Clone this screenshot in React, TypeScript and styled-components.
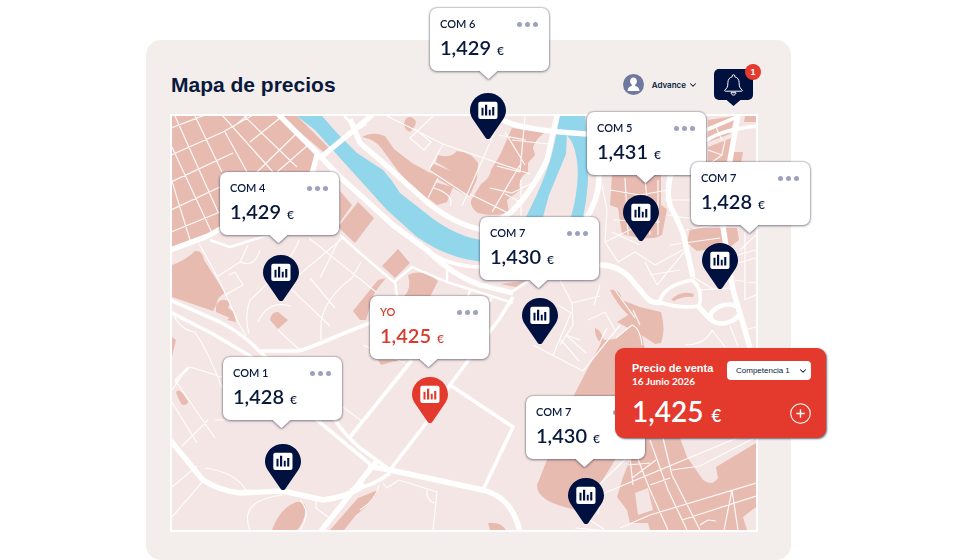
import styled, { createGlobalStyle, css } from 'styled-components';
import { ChevronDown } from 'lucide-react';

const colors = {
  navy: '#00113f',
  ink: '#08193c',
  red: '#e4392d',
  panel: '#f3eeeb',
  land: '#f4e6e4',
  block: '#e8bbb1',
  water: '#92d6ec',
  dot: '#9da1be',
};

const sans = "'Liberation Sans', Arial, sans-serif";
const rounded = "Lato, 'Liberation Sans', sans-serif";

// visible area of the city plan, in plan units
const plan = { x: 172, y: 116, width: 584, height: 414 };

const GlobalStyle = createGlobalStyle`
  * {
    box-sizing: border-box;
  }

  body {
    margin: 0;
    background: #fff;
    color: ${colors.ink};
    font-family: ${sans};
  }

  button {
    border: none;
    padding: 0;
    background: none;
    color: inherit;
    font: inherit;
    cursor: pointer;
  }
`;

const Page = styled.main`
  display: grid;
  grid-template-columns: 146fr 645fr 189fr;
  padding-top: 40px;
  overflow: hidden;
`;

const Panel = styled.section`
  grid-column: 2;
  min-width: 0;
  padding: 29px 33px 28px 24px;
  border-radius: 15px;
  background: ${colors.panel};
`;

const Header = styled.header`
  display: flex;
  align-items: center;
  justify-content: space-between;
  height: 31px;
  margin-bottom: 14px;
  padding: 0 5px 0 1px;
`;

const Title = styled.h1`
  margin: 0;
  font-size: 21px;
  line-height: 24px;
  font-weight: 700;
`;

const HeaderActions = styled.div`
  display: flex;
  align-items: center;
  gap: 16px;
`;

const UserButton = styled.button`
  display: flex;
  align-items: center;
  gap: 2px;
  font-family: Inter, ${sans};
  font-size: 8px;
  line-height: 12px;
  font-weight: 600;
`;

const Avatar = styled.svg`
  width: 21px;
  height: 21px;
  margin-right: 6px;
`;

const BellButton = styled.button`
  position: relative;
  display: grid;
  place-items: center;
  width: 39px;
  height: 31px;
  border-radius: 5px;
  background: ${colors.navy};

  &::after {
    content: '';
    position: absolute;
    top: 100%;
    left: 50%;
    width: 14px;
    height: 6px;
    margin-left: -7px;
    background: ${colors.navy};
    clip-path: polygon(0 0, 100% 0, 50% 100%);
  }
`;

const Badge = styled.span`
  position: absolute;
  top: -5px;
  right: -8px;
  width: 16px;
  height: 16px;
  border-radius: 50%;
  background: ${colors.red};
  color: #fff;
  font-size: 9px;
  line-height: 16px;
  font-weight: 700;
  text-align: center;
`;

const Map = styled.div`
  position: relative;
  border: 2px solid #fff;
`;

const CitySvg = styled.svg`
  display: block;
  width: 100%;
  height: auto;
  background: ${colors.land};
`;

const placed = css<{ $x: number; $y: number }>`
  position: absolute;
  left: ${({ $x }) => (($x - plan.x) / plan.width) * 100}%;
  top: ${({ $y }) => (($y - plan.y) / plan.height) * 100}%;
`;

const PinSvg = styled.svg<{ $x: number; $y: number }>`
  ${placed}
  width: 36px;
  height: 46px;
`;

const Callout = styled.article<{ $x: number; $y: number; $own?: boolean }>`
  ${placed}
  width: 119px;
  height: 63px;
  padding: 8px 10px;
  border-radius: 7px;
  background: #fff;
  color: ${({ $own }) => ($own ? '#d63c2c' : colors.ink)};
  font-family: ${rounded};
  filter: drop-shadow(0 0 1px rgba(40, 40, 65, 0.6)) drop-shadow(0 1px 1px rgba(40, 40, 65, 0.35));

  &::after {
    content: '';
    position: absolute;
    top: 100%;
    left: 50%;
    width: 18px;
    height: 8px;
    margin-left: -10px;
    background: #fff;
    clip-path: polygon(0 0, 100% 0, 56% 92%, 50% 100%, 44% 92%);
  }
`;

const CalloutTop = styled.div`
  display: flex;
  align-items: center;
  justify-content: space-between;
  height: 16px;
`;

const CalloutName = styled.h2`
  margin: 0;
  font-size: 11px;
  line-height: 16px;
  font-weight: 600;
`;

const DotsButton = styled.button`
  display: flex;
  gap: 3px;
  margin-right: 1px;

  i {
    width: 5px;
    height: 5px;
    border-radius: 50%;
    background: ${colors.dot};
  }
`;

const Price = styled.p<{ $large?: boolean }>`
  display: flex;
  align-items: baseline;
  gap: ${({ $large }) => ($large ? 8 : 6)}px;
  margin: 0;
  font-family: ${rounded};
  font-size: ${({ $large }) => ($large ? 28 : 20)}px;
  line-height: ${({ $large }) => ($large ? 32 : 30)}px;
  font-weight: 600;

  small {
    font-size: ${({ $large }) => ($large ? 17 : 12)}px;
  }
`;

const SaleCard = styled.section<{ $x: number; $y: number }>`
  ${placed}
  display: flex;
  flex-direction: column;
  justify-content: space-between;
  width: 211px;
  height: 90px;
  padding: 13px 15px 6px 17px;
  border-radius: 9px;
  background: ${colors.red};
  color: #fff;
  box-shadow: 1px 1px 2px rgba(40, 40, 65, 0.7);
`;

const SaleRow = styled.div`
  display: flex;
  align-items: center;
  justify-content: space-between;
`;

const SaleTitle = styled.h2`
  margin: 0;
  font-size: 11px;
  line-height: 14px;
  font-weight: 700;
  white-space: nowrap;
`;

const SaleDate = styled.time`
  display: block;
  font-family: ${rounded};
  font-size: 10px;
  line-height: 13px;
  font-weight: 700;
`;

const SelectBox = styled.label`
  position: relative;
  align-self: flex-start;

  svg {
    position: absolute;
    top: 5px;
    right: 3px;
    color: ${colors.ink};
    pointer-events: none;
  }
`;

const Select = styled.select`
  display: block;
  width: 84px;
  height: 19px;
  padding: 0 14px 0 9px;
  border: none;
  border-radius: 4px;
  appearance: none;
  background: #fff;
  color: ${colors.ink};
  font-family: ${sans};
  font-size: 8px;
`;

const AddButton = styled.button`
  display: grid;
  place-items: center;
  width: 21px;
  height: 21px;
`;

type Competitor = {
  name: string;
  price: string;
  card: [number, number];
  pin: [number, number];
  own?: boolean;
};

const competitors: Competitor[] = [
  { name: 'COM 6', price: '1,429', card: [430, 8], pin: [470, 93] },
  { name: 'COM 4', price: '1,429', card: [220, 172], pin: [263, 255] },
  { name: 'COM 5', price: '1,431', card: [587, 112], pin: [623, 195] },
  { name: 'COM 7', price: '1,428', card: [691, 162], pin: [702, 243] },
  { name: 'COM 7', price: '1,430', card: [480, 217], pin: [522, 298] },
  { name: 'YO', price: '1,425', card: [370, 296], pin: [412, 377], own: true },
  { name: 'COM 1', price: '1,428', card: [223, 357], pin: [265, 444] },
  { name: 'COM 7', price: '1,430', card: [526, 396], pin: [568, 478] },
];

const blocks = [
  'M172 116H277L317 155 312 174H220V228L206 235 172 247Z',
  'M280 116H297L332 151 326 154Z',
  'M340 191L352 205 340 222Z',
  'M358 202L374 218 355 243 338 227Z',
  'M172 265Q186 260 195 251 202 250 204 260L225 293Q218 296 216 305L213 311 172 297Z',
  'M216 305q4-6 9-5q6 1 4 6q-3 2 4 5q4 6-3 7l-14-6Z',
  'M270 320Q271 312 278 312L288 320 278 329Z',
  'M172 337L176 340 172 356Z',
  'M176 392q3-4 7 2l5 7q0 4-5 4q-3-1-7-13Z',
  'M227 320l7-6 2 8Z',
  'M272 530Q280 508 296 502 307 500 306 511 303 524 297 530Z',
  'M330 530Q344 514 358 498L378 490Q376 500 356 515L344 530Z',
  'M488 523Q500 521 506 530H490Z',
  'M362 137Q372 131 385 136L394 149 412 163Q424 169 438 178L428 199Q412 188 398 171L382 149Q375 139 362 137Z',
  'M404 124Q405 116 411 117 418 120 415 126L410 132Q404 129 404 124Z',
  'M428 170L434 164 451 171 436 162 438 155Q450 159 457 151 471 152 478 163L477 179 469 197 436 178 428 170Z',
  'M434 182L453 187 447 202 437 205 428 198Z',
  'M512 128L544 133Q534 141 533 148L535 155 528 163 528 172Q517 178 520 190L507 200 509 213Q492 217 478 213 467 205 473 197L481 184Q490 178 491 170L500 155Z',
  'M398 249L410 263 395 278 382 266Z',
  'M408 275Q422 268 438 281L430 297H404Q412 288 408 275Z',
  'M353 311L378 280 386 278Q373 293 372 300L366 320H360Z',
  'M500 284L525 281 516 287Z',
  'M378 360H404Q392 361 381 365Z',
  'M612 175H661V205L667 209 662 235Q650 242 622 234L618 208 610 205Z',
  'M690 228H737L739 240 730 247 697 251 687 243Z',
  'M708 120L735 116 730 134 708 142Z',
  'M745 116H756V122H744Z',
  'M708 147L734 137 726 178 708 170Z',
  'M733 152H743L738 180H730Z',
  'M610 290Q620 288 622 300L640 307 661 312Q666 330 661 343L655 344 643 336 617 322 628 315Q616 303 610 290Z',
  'M595 328Q600 329 604 340L615 339 632 325 642 336 645 350 640 400 620 452 590 500 577 510Q536 502 537 485L547 460 573 397 601 343Q594 337 595 328Z',
  'M647 438H680L687 457 703 480Q712 487 718 478L716 467 756 443V507L743 517 747 530H650L648 523H630L627 510 617 497 623 477 630 460Z',
  'M671 300Q680 290 694 294L693 297Q683 296 674 301Z',
];

const water = [
  'M297 116H322L337 133 357 153 383 170Q393 181 400 193L432 218Q458 237 482 240H486V262Q450 260 417 237L387 210 340 158 315 130Z',
  'M560 116H585L588 150Q590 185 583 218L571 217Q584 170 572 142L567 135 566 154 549 195 543 217H526Q550 170 555 140Z',
];

// one path per road width
const streets =
  'M175 116L218 212M195 116L222 172M225 132L247 172M171 145L212 233M171 178L190 240M171 128L205 115M171 155L223 132 253 115M171 182L233 153M171 210L220 187M171 232L220 212M222 115L273 172M243 115L297 167M233 127L248 115M250 142L280 118M257 172L297 133M277 172L308 145' +
  'M199 244Q218 275 238 322L246 336M248 245L240 262 218 276M225 295L243 285 235 272 229 275M240 262Q255 268 260 250M258 322Q268 300 290 306M299 240Q292 262 250 300 244 316 249 334M309 238L376 292M344 237L287 285 330 326M361 262L352 278Q325 298 321 322V340M310 278L335 308M320 278L340 238M278 330L302 352' +
  'M172 312Q180 330 195 332 210 355 222 388M175 383L190 367 222 377M188 367L175 380 215 438M172 402L197 443M215 420H240M172 390L188 367M182 446L208 420M172 487L197 466M172 517L204 480M205 468Q235 472 246 490 254 490 256 492M283 495Q238 500 250 530M316 500V508L328 517M343 407L363 422M300 530Q312 512 300 500' +
  'M363 345L405 363M383 483L387 488 399 480 437 492 433 530M427 490Q426 500 434 503M360 510Q376 500 379 485' +
  'M433 116L410 138 424 150 431 142 415 129M387 116L443 144 530 174M443 144L429 170 470 197M438 178L428 198M434 188Q455 195 450 206M462 206L500 120M470 194L510 214M492 212L520 165M490 188L512 193 532 183M497 166L520 172 525 116M505 132L525 165M512 140L548 144M521 180V216M499 135L526 140M505 194L520 202' +
  'M560 280L572 303 600 296M572 303L573 325 560 345M533 345L583 371 620 325M566 335L580 340M553 355L571 313 558 305M561 340L579 361M567 336L586 353M600 285L594 305' +
  'M602 185L607 210 605 242 618 262M610 190L640 195 668 190M614 220L660 222M612 232L640 245M625 178L628 235M645 178L650 235M658 180V235M605 242L640 225M618 262L635 252 655 265 690 246M645 262L657 285 690 245M650 275L680 270M668 215L700 220M670 245L720 238M686 230L714 225M665 200L690 200M700 290L730 288M693 277L715 290M740 250L756 235M738 263L756 258M735 280L756 283M744 300L756 295M720 260L756 250M745 232V300M708 165L722 155M722 140L715 125M708 150L722 155 725 140' +
  'M588 320L605 312 615 330M633 310L640 325M615 290L635 318M616 338L632 325Q640 328 642 345M600 342L607 328M685 345Q705 345 712 330L725 347M730 326L738 346M745 330L756 327' +
  'M575 528L600 530M598 515L602 494 756 430M577 506L645 440M620 528L650 515 756 483M636 454L650 490 668 530M650 440L668 490 687 530M663 438L672 475 700 530M632 478L656 460M628 465L650 463M630 458L633 485M650 485L670 478M672 470L700 466 756 437M682 520L756 496M732 490L724 530M732 490L738 530M700 525L708 520 716 521M590 520L605 530';

const smallRoads =
  'M210 240L230 247 262 237 310 222M395 282L397 296M340 235L360 253 394 282 412 267 447 282 513 303M510 293L556 263M447 282V270M470 290L467 300M492 295L490 302M344 116L358 129 366 124';

const midRoads =
  'M350 437L412 360M390 470L427 422 450 385 467 362 500 318 513 297M450 385L513 427 483 490M258 351H298Q305 350 347 332L375 321M706 141Q720 130 757 126M706 130L737 117M660 302Q662 286 692 280 704 290 699 306 678 309 660 302M427 250Q450 268 486 267M600 265Q575 275 556 263M350 490Q372 487 390 473' +
  // the two carriageways of the ring road
  'M170 300L220 322Q245 335 260 352L335 420Q345 435 360 448L390 470M170 312L213 334 250 356 317 420 370 464';

const wideRoads =
  'M278 114L317 153 340 177 360 195 393 225 427 250Q452 275 480 285L513 293M320 158L371 116V110M350 119L360 143 380 160 427 202Q455 225 484 230L510 213Q530 195 547 160L557 115M503 120Q520 130 587 134M584 222Q600 198 599 175M170 250L208 236 222 228M170 440L203 480Q220 491 240 493L283 491 323 500Q348 497 365 485M368 466L390 470 483 490Q512 497 520 532M376 462L320 532M600 265Q618 265 630 278L646 297Q652 304 661 302M671 173Q664 200 675 215L683 233 693 277M738 115L730 160 723 227 733 290 742 320 750 348M317 155L312 174M698 306L711 320';

const CityMap = () => (
  <CitySvg viewBox={`${plan.x} ${plan.y} ${plan.width} ${plan.height}`} aria-hidden="true">
    <g fill={colors.block}>
      {blocks.map((d) => (
        <path key={d} d={d} />
      ))}
    </g>
    <path d="M635 493L648 488 653 510 638 515Z" fill={colors.land} />
    <g fill={colors.water}>
      {water.map((d) => (
        <path key={d} d={d} />
      ))}
    </g>
    <g fill="none" stroke="#fff" strokeLinejoin="round">
      <path d={streets} strokeWidth="1.2" opacity="0.9" />
      <path d={smallRoads} strokeWidth="2.4" />
      <path d={midRoads} strokeWidth="3.6" />
      <path d={wideRoads} strokeWidth="5.4" />
      <ellipse cx="725" cy="314" rx="15" ry="9" strokeWidth="4.5" transform="rotate(-15 725 314)" />
    </g>
  </CitySvg>
);

const Pin = ({ x, y, color }: { x: number; y: number; color: string }) => (
  <PinSvg $x={x} $y={y} viewBox="0 0 36 46" aria-hidden="true">
    <path
      fill={color}
      d="M18 46c-1 0-2-.6-2.6-1.6L3.4 27C1.200 23.900 0 20.800 0 17.500 0 7.800 8 0 18 0s18 7.800 18 17.500c0 3.300-1.200 6.400-3.400 9.500l-12 17.400C20 45.400 19 46 18 46z"
    />
    <rect x="8.300" y="8.700" width="19.200" height="17.300" rx="2" fill="#fff" />
    <path fill={color} d="M11.500 14.800h2v7.800h-2zM15 11.800h2.200v10.800H15zM18.800 16.800h1.900v5.800h-1.900zM22.200 14h2.100v8.600h-2.100z" />
  </PinSvg>
);

const App = () => (
  <>
    <GlobalStyle />
    <Page>
      <Panel>
        <Header>
          <Title>Mapa de precios</Title>
          <HeaderActions>
            <UserButton type="button">
              <Avatar viewBox="0 0 21 21" aria-hidden="true">
                <circle cx="10.5" cy="10.5" r="10.5" fill="#6f789f" />
                <path
                  fill="#fff"
                  d="M10.5 3.6c2 0 3.4 1.5 3.4 3.6 0 1.5-.7 2.8-1.7 3.5v1.2c2.5.5 4 1.8 4.3 5H4.5c.3-3.2 1.8-4.5 4.3-5v-1.2c-1-.7-1.7-2-1.7-3.5 0-2.1 1.4-3.6 3.4-3.6z"
                />
              </Avatar>
              Advance
              <ChevronDown size={10} strokeWidth={2.5} />
            </UserButton>
            <BellButton type="button" aria-label="Notificaciones">
              <svg width="19" height="22" viewBox="0 0 19 22" fill="none" stroke="#fff" strokeWidth="1">
                <path d="M8.2 2.8V2c0-.8.5-1.3 1.3-1.3s1.3.5 1.3 1.3v.8c2.700.6 4.300 2.800 4.300 5.700 0 4.300 1 6.200 2.900 7.200.6.4.5 1.500-.4 1.500H1.400c-.9 0-1-1.100-.4-1.500 1.900-1 2.900-2.900 2.900-7.200 0-2.900 1.600-5.100 4.300-5.700z" />
                <path d="M7 18.700h5c-.2 1.500-1.200 2.400-2.500 2.400S7.200 20.200 7 18.700z" />
              </svg>
              <Badge>1</Badge>
            </BellButton>
          </HeaderActions>
        </Header>

        <Map>
          <CityMap />
          {competitors.map(({ pin, own }) => (
            <Pin key={pin.join()} x={pin[0]} y={pin[1]} color={own ? colors.red : colors.navy} />
          ))}
          {competitors.map(({ name, price, card, own }) => (
            <Callout key={card.join()} $x={card[0]} $y={card[1]} $own={own}>
              <CalloutTop>
                <CalloutName>{name}</CalloutName>
                <DotsButton type="button" aria-label={`Opciones de ${name}`}>
                  <i />
                  <i />
                  <i />
                </DotsButton>
              </CalloutTop>
              <Price>
                {price} <small>€</small>
              </Price>
            </Callout>
          ))}

          <SaleCard $x={615} $y={348}>
            <SaleRow>
              <div>
                <SaleTitle>Precio de venta</SaleTitle>
                <SaleDate dateTime="2026-06-16">16 Junio 2026</SaleDate>
              </div>
              <SelectBox>
                <Select aria-label="Competencia" defaultValue="1">
                  <option value="1">Competencia 1</option>
                </Select>
                <ChevronDown size={10} strokeWidth={2.5} />
              </SelectBox>
            </SaleRow>
            <SaleRow>
              <Price $large>
                1,425 <small>€</small>
              </Price>
              <AddButton type="button" aria-label="Añadir">
                <svg width="21" height="21" viewBox="0 0 21 21" fill="none" stroke="#fff" strokeWidth="1.1">
                  <circle cx="10.5" cy="10.5" r="9.8" />
                  <path d="M10.5 6.3v8.400M6.300 10.500h8.400" strokeWidth="1.4" />
                </svg>
              </AddButton>
            </SaleRow>
          </SaleCard>
        </Map>
      </Panel>
    </Page>
  </>
);

export default App;
